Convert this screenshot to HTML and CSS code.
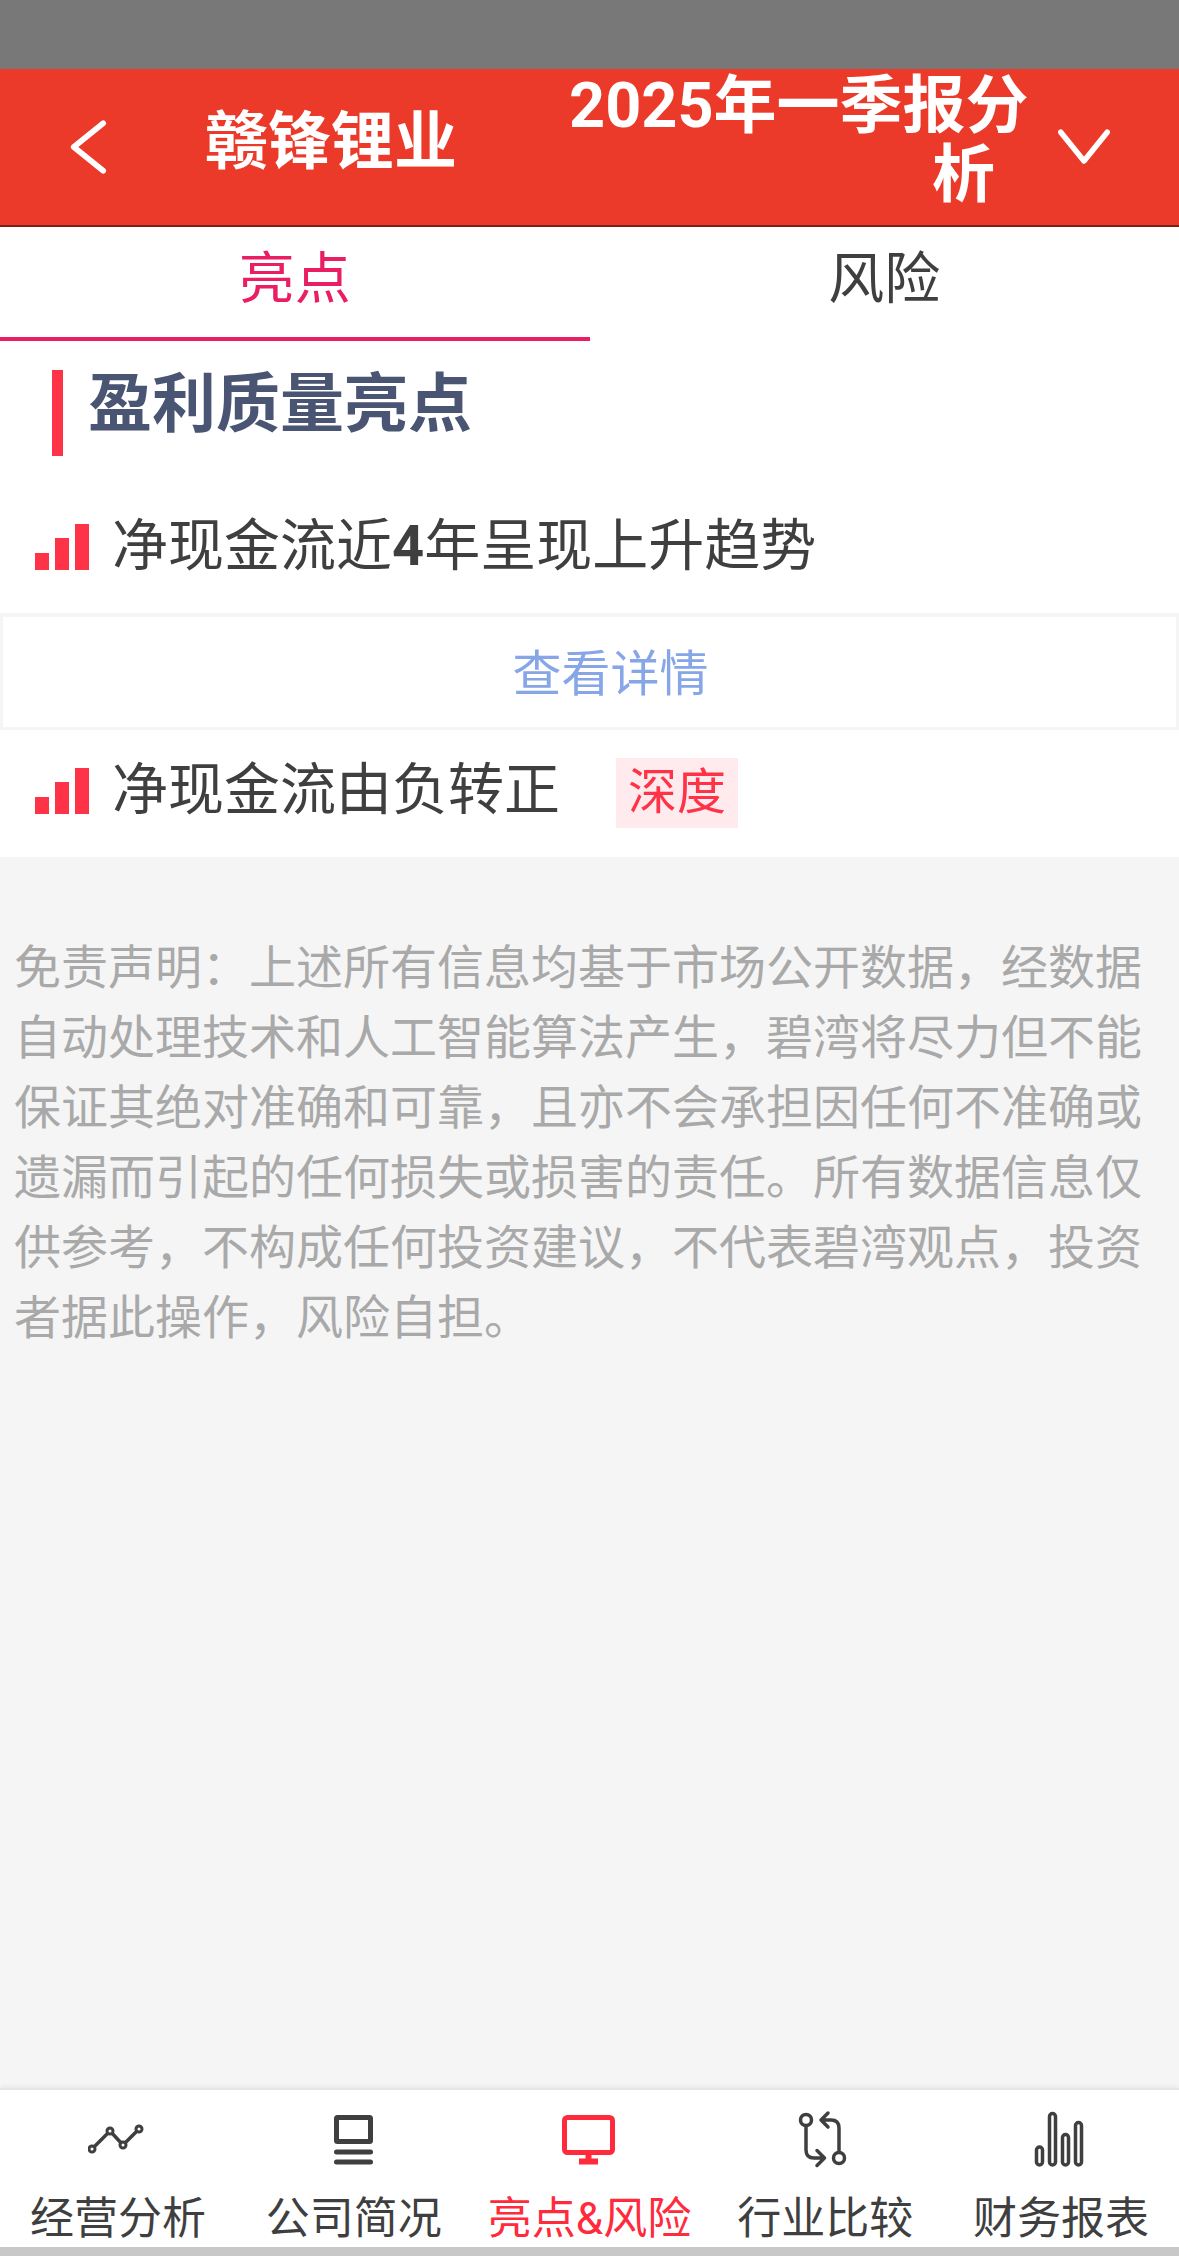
FILE: index.html
```html
<!DOCTYPE html>
<html lang="zh-CN">

<head>
    <meta charset="UTF-8">
    <meta name="viewport" content="width=device-width, initial-scale=1.0">
    <title>赣锋锂业 2025年一季报分析</title>
    <link rel="stylesheet" href="styles.css">
</head>

<body>

    <div class="status-bar"></div>

    <!-- Top header -->
    <header class="top-bar">
        <svg class="back-icon" viewBox="0 0 40 56"><path d="M36 3 L5 28 L36 53"/></svg>
        <h1 class="company">赣锋锂业</h1>
        <div class="report">
            <span class="report-line">2025年一季报分</span>
            <span class="report-line report-line-last">析</span>
        </div>
        <svg class="down-icon" viewBox="0 0 56 38"><path d="M3 3 L28 34 L53 3"/></svg>
    </header>

    <!-- Tabs -->
    <div class="tabs">
        <div class="tab tab-active">亮点</div>
        <div class="tab">风险</div>
    </div>

    <main class="content">
        <section class="card">
            <div class="section-head">
                <span class="section-mark"></span>
                <h2 class="section-title">盈利质量亮点</h2>
            </div>

            <div class="item">
                <span class="level"><i class="lv1"></i><i class="lv2"></i><i class="lv3"></i></span>
                <span class="item-text">净现金流近<b>4</b>年呈现上升趋势</span>
            </div>

            <div class="detail-link">查看详情</div>

            <div class="item">
                <span class="level"><i class="lv1"></i><i class="lv2"></i><i class="lv3"></i></span>
                <span class="item-text">净现金流由负转正</span>
                <span class="tag">深度</span>
            </div>
        </section>

        <p class="disclaimer">免责声明：上述所有信息均基于市场公开数据，经数据自动处理技术和人工智能算法产生，碧湾将尽力但不能保证其绝对准确和可靠，且亦不会承担因任何不准确或遗漏而引起的任何损失或损害的责任。所有数据信息仅供参考，不构成任何投资建议，不代表碧湾观点，投资者据此操作，风险自担。</p>
    </main>

    <!-- Bottom navigation -->
    <nav class="bottom-nav">
        <div class="nav-item">
            <svg class="nav-icon" viewBox="0 0 60 60">
                <path d="M4 39 L22 21 L35 35 L51 19"/>
                <circle class="node" cx="4" cy="39" r="3"/>
                <circle class="node" cx="22" cy="21" r="3"/>
                <circle class="node" cx="35" cy="35" r="3"/>
                <circle class="node" cx="51" cy="19" r="3"/>
            </svg>
            <span class="nav-label">经营分析</span>
        </div>
        <div class="nav-item">
            <svg class="nav-icon nav-icon-thick" viewBox="0 0 60 60">
                <rect x="12.500" y="7.500" width="34" height="24" rx="1"/>
                <path d="M12.500 42 H46.500 M12.500 52 H46.500"/>
            </svg>
            <span class="nav-label">公司简况</span>
        </div>
        <div class="nav-item nav-item-active">
            <svg class="nav-icon nav-icon-thick" viewBox="0 0 60 60">
                <rect x="5.500" y="7.500" width="48" height="35" rx="3"/>
                <path class="stand" d="M29.500 44 V50 M20 51.500 H39"/>
            </svg>
            <span class="nav-label">亮点&amp;风险</span>
        </div>
        <div class="nav-item">
            <svg class="nav-icon" viewBox="0 0 60 60">
                <circle cx="11" cy="10" r="5.500"/>
                <circle cx="44" cy="48" r="5.500"/>
                <path d="M11 16 V40 Q11 48 19 48 H29.500 M22 40.500 L29.500 48 L22 55.500"/>
                <path d="M44 42 V18 Q44 10 36 10 H26 M33 3 L26 10 L33 17"/>
            </svg>
            <span class="nav-label">行业比较</span>
        </div>
        <div class="nav-item">
            <svg class="nav-icon" viewBox="0 0 60 60">
                <rect x="5.500" y="37" width="6" height="18" rx="3"/>
                <rect x="18.500" y="3.500" width="6" height="51.500" rx="3"/>
                <rect x="31.500" y="24.500" width="6" height="30.500" rx="3"/>
                <rect x="44.500" y="12.500" width="6" height="42.500" rx="3"/>
            </svg>
            <span class="nav-label">财务报表</span>
        </div>
    </nav>

    <div class="bottom-edge"></div>

</body>

</html>
```

FILE: styles.css
```css
/* Reset */
* {
    box-sizing: border-box;
    margin: 0;
    padding: 0;
}

body {
    display: flex;
    flex-direction: column;
    width: 1179px;
    height: 100vh;
    overflow: hidden;
    background: #f5f5f5;
    font-family: Roboto, "Noto Sans CJK SC", sans-serif;
    color: #3f3f3f;
}

.status-bar {
    height: 69px;
    flex-shrink: 0;
    background: #787878;
}

/* Header */
.top-bar {
    display: flex;
    align-items: center;
    height: 158px;
    flex-shrink: 0;
    padding-left: 69px;
    background: #eb3a29;
    border-bottom: 2px solid #7c2118;
    color: #fff;
}

.back-icon {
    width: 38px;
    height: 54px;
    flex-shrink: 0;
}

.back-icon path,
.down-icon path {
    fill: none;
    stroke: #fff;
    stroke-width: 6;
    stroke-linecap: round;
    stroke-linejoin: round;
}

.company {
    margin-left: 98px;
    margin-bottom: 12px;
    width: 364px;
    font-size: 63px;
    font-weight: 700;
    line-height: 69px;
    white-space: nowrap;
}

.report {
    width: 459px;
    margin-bottom: 15px;
    font-size: 63px;
    font-weight: 700;
    line-height: 69px;
    text-align: right;
}

.report-line {
    display: block;
    white-space: nowrap;
}

.report-line-last {
    padding-right: 33px;
}

.down-icon {
    width: 52px;
    height: 36px;
    margin-left: 30px;
    flex-shrink: 0;
}

/* Tabs */
.tabs {
    display: flex;
    height: 114px;
    flex-shrink: 0;
    background: #fff;
}

.tab {
    flex: 1;
    text-align: center;
    font-size: 56px;
    line-height: 104px;
    color: #3f3f3f;
}

.tab-active {
    color: #e91e63;
    border-bottom: 4px solid #e91e63;
}

/* Content */
.content {
    flex: 1;
    min-height: 0;
    background: #f5f5f5;
}

.card {
    background: #fff;
}

.section-head {
    display: flex;
    height: 145px;
    padding: 29px 0 30px 52px;
}

.section-mark {
    width: 11px;
    height: 86px;
    background: #ff3347;
}

.section-title {
    margin-left: 25px;
    font-size: 64px;
    font-weight: 700;
    line-height: 70px;
    color: #4a5574;
}

.item {
    display: flex;
    align-items: center;
    height: 127px;
    padding-left: 35px;
    padding-bottom: 6px;
}

.level {
    display: flex;
    align-items: flex-end;
    gap: 6px;
    height: 46px;
    flex-shrink: 0;
}

.level i {
    display: block;
    width: 14px;
    background: #ff3347;
}

.lv1 {
    height: 17px;
}

.lv2 {
    height: 32px;
}

.lv3 {
    height: 46px;
}

.item-text {
    margin-left: 23px;
    margin-bottom: 2px;
    font-size: 56px;
    line-height: 70px;
    white-space: nowrap;
}

.tag {
    margin-left: 56px;
    margin-top: 4px;
    padding: 0 12px;
    font-size: 49px;
    line-height: 70px;
    background: #ffebee;
    color: #ff3347;
}

.detail-link {
    height: 117px;
    padding: 6px 0 0 42px;
    border: solid #f5f5f5;
    border-width: 4px 3px 3px;
    text-align: center;
    font-size: 49px;
    line-height: 104px;
    color: #86a6e8;
}

.disclaimer {
    padding: 76px 16px 0 14px;
    font-size: 47px;
    line-height: 70px;
    color: #a9a9a9;
}

/* Bottom navigation */
.bottom-nav {
    display: flex;
    height: 159px;
    flex-shrink: 0;
    background: #fff;
    border-top: 2px solid #e6e6e6;
    box-shadow: 0 -2px 4px rgba(0, 0, 0, 0.05);
}

.nav-item {
    display: flex;
    flex: 1;
    flex-direction: column;
    align-items: center;
    padding-top: 20px;
    font-size: 44px;
    white-space: nowrap;
    color: #3f3f3f;
}

.nav-label {
    margin-top: 21px;
    line-height: 56px;
}

.nav-icon {
    display: block;
    width: 60px;
    height: 60px;
    flex-shrink: 0;
    fill: none;
    stroke: currentColor;
    stroke-width: 3.5;
    stroke-linecap: round;
    stroke-linejoin: round;
}

.nav-icon .node {
    fill: #fff;
    stroke-width: 3;
}

.nav-icon-thick {
    stroke-width: 5;
}

.nav-icon .stand {
    stroke-width: 6;
    stroke-linecap: butt;
}

.nav-item-active {
    color: #ff2a3c;
}

.bottom-edge {
    height: 9px;
    flex-shrink: 0;
    background: #c8c8c8;
}
```
